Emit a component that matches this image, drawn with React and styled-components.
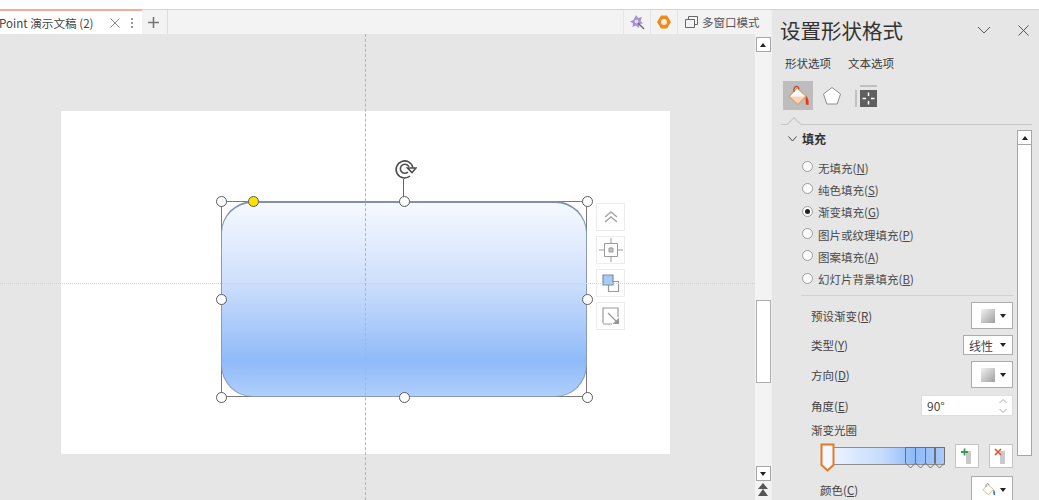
import React from "react";
import styled, { createGlobalStyle } from "styled-components";

const FONT = `"Noto Sans CJK SC", "Noto Sans", sans-serif`;

const GlobalStyle = createGlobalStyle`
  html, body { margin: 0; padding: 0; background: #fff; overflow: hidden; }
  body { font-family: ${FONT}; }
`;

const Page = styled.div`
  width: 1039px;
  height: 500px;
  display: flex;
  flex-direction: column;
  overflow: hidden;
`;
const TopGap = styled.div`
  height: 10px;
  flex: none;
  background: #fff;
  border-bottom: 1px solid #d4d4d4;
  box-sizing: border-box;
`;
const Body = styled.div`
  flex: 1;
  display: flex;
  min-height: 0;
`;
const Workspace = styled.div`
  width: 771px;
  flex: none;
  display: flex;
  flex-direction: column;
`;

/* tab bar */
const TabBar = styled.div`
  height: 24px;
  flex: none;
  display: flex;
  align-items: stretch;
  background: #f3f3f3;
`;
const Tab = styled.div`
  width: 142px;
  margin-top: -1px;
  height: 26px;
  box-sizing: border-box;
  background: #fff;
  border-top: 2px solid #f7a99c;
  display: flex;
  align-items: center;
  font-size: 11.6px;
  color: #444;
  white-space: nowrap;
  overflow: hidden;
`;
const TabTitle = styled.span`
  margin-left: -1px;
  width: 110px;
  flex: none;
`;
const TabDots = styled.svg`
  margin-left: 5px;
`;
const TabAdd = styled.div`
  width: 26px;
  box-sizing: border-box;
  padding-right: 3px;
  border-right: 1px solid #dcdcdc;
  display: flex;
  align-items: center;
  justify-content: center;
`;
const TabSpacer = styled.div`
  flex: 1;
`;
const TabTool = styled.div`
  width: 26px;
  border-left: 1px solid #e6e6e6;
  display: flex;
  align-items: center;
  justify-content: center;
`;
const WindowMode = styled.div`
  width: 94px;
  border-left: 1px solid #e6e6e6;
  box-sizing: border-box;
  padding-left: 7px;
  display: flex;
  align-items: center;
  gap: 4px;
  font-size: 11.5px;
  color: #555;
  white-space: nowrap;
`;

/* editor */
const EditorRow = styled.div`
  flex: 1;
  display: flex;
  min-height: 0;
`;
const Editor = styled.div`
  flex: 1;
  position: relative;
  background: #e6e6e6;
  padding: 77px 0 0 61px;
  box-sizing: border-box;
`;
const Slide = styled.div`
  width: 609px;
  height: 343px;
  background: #fff;
  position: relative;
`;
const GuideV = styled.div`
  position: absolute;
  left: 365px;
  top: 0;
  bottom: 0;
  border-left: 1px dashed #b4b4b4;
`;
const GuideH = styled.div`
  position: absolute;
  left: 0;
  right: 0;
  top: 249px;
  border-top: 1px dotted #d2d2d2;
`;
const Frame = styled.div`
  position: absolute;
  left: 160px;
  top: 90px;
  width: 366px;
  height: 196px;
  outline: 1px solid #7a7a7a;
  outline-offset: -1px;
`;
const RoundRect = styled.div`
  position: absolute;
  inset: 0;
  border-radius: 32px;
  border: 1px solid #8a9ab8;
  border-top: 2px solid #7f90b0;
  background: linear-gradient(180deg, #f6f9ff 0%, #cfe0fc 40%, #8fbaf9 82%, #b0cffb 100%);
`;
const Handle = styled.div`
  position: absolute;
  left: ${(p) => p.$x};
  top: ${(p) => p.$y};
  width: 9px;
  height: 9px;
  margin: -5.5px 0 0 -5.5px;
  border-radius: 50%;
  background: ${(p) => (p.$yellow ? "#ffe100" : "#fff")};
  border: 1.5px solid #5c5c5c;
  box-sizing: content-box;
`;
const RotateStem = styled.div`
  position: absolute;
  left: calc(50% - 1px);
  top: -22px;
  height: 18px;
  border-left: 1.5px solid #666;
`;
const RotateIcon = styled.svg`
  position: absolute;
  left: calc(50% - 11px);
  top: -43px;
`;
const SideTools = styled.div`
  position: absolute;
  left: 375px;
  top: 2px;
  display: flex;
  flex-direction: column;
  gap: 5px;
`;
const SideTool = styled.div`
  width: 29px;
  height: 28px;
  box-sizing: border-box;
  border: 1px solid #ececec;
  background: #fff;
  display: flex;
  align-items: center;
  justify-content: center;
`;

/* scrollbars */
const ScrollColumn = styled.div`
  width: 16px;
  flex: none;
  background: #f3f3f3;
  display: flex;
  flex-direction: column;
  align-items: center;
  box-sizing: border-box;
  padding-top: 3px;
`;
const ScrollButton = styled.div`
  width: 15px;
  height: 15px;
  flex: none;
  box-sizing: border-box;
  background: #fff;
  border: 1px solid #a6a6a6;
  margin-top: ${(p) => p.$top || 0}px;
  display: flex;
  align-items: center;
  justify-content: center;
`;
const Thumb = styled.div`
  width: 15px;
  height: ${(p) => p.$h}px;
  flex: none;
  box-sizing: border-box;
  margin-top: ${(p) => p.$top}px;
  background: #fff;
  border: 1px solid #aeaeae;
`;
const DoubleUp = styled.svg`
  margin-top: 2px;
  flex: none;
`;

/* panel */
const Panel = styled.div`
  flex: 1;
  background: #e6e6e6;
  border-left: 1px solid #f0f0f0;
  margin-top: 0;
  display: flex;
  flex-direction: column;
  color: #3c3c3c;
  min-width: 0;
`;
const PanelHead = styled.div`
  height: 41px;
  flex: none;
  box-sizing: border-box;
  padding: 0 10px 1px 8px;
  display: flex;
  align-items: center;
`;
const PanelTitle = styled.div`
  flex: 1;
  font-size: 20.5px;
  line-height: 30px;
  color: #333;
`;
const HeadIcon = styled.svg`
  margin-left: ${(p) => p.$gap || 0}px;
`;
const PanelTabs = styled.div`
  height: 24px;
  flex: none;
  padding: 0 0 0 13px;
  display: flex;
  align-items: center;
  gap: 17px;
  font-size: 11.5px;
  color: #3a3a3a;
`;
const IconRow = styled.div`
  height: 29px;
  margin-top: 6px;
  flex: none;
  padding-left: 11px;
  display: flex;
  gap: 4px;
`;
const IconTab = styled.div`
  width: 30px;
  height: 29px;
  display: flex;
  align-items: center;
  justify-content: center;
  background: ${(p) => (p.$active ? "#bdbdbd" : "transparent")};
`;
const Divider = styled.div`
  height: 15px;
  flex: none;
  margin: 0 7px 0 9px;
  box-sizing: border-box;
  border-bottom: 1px solid #c6c6c6;
  position: relative;
  &::before {
    content: "";
    position: absolute;
    left: 8px;
    bottom: -5px;
    width: 9px;
    height: 9px;
    background: #e6e6e6;
    border-left: 1px solid #c6c6c6;
    border-top: 1px solid #c6c6c6;
    transform: rotate(45deg);
  }
`;
const PanelBody = styled.div`
  flex: 1;
  display: flex;
  min-height: 0;
  padding-top: 5px;
`;
const Form = styled.div`
  width: 245px;
  flex: none;
  display: flex;
  flex-direction: column;
  box-sizing: border-box;
  padding-right: 4px;
`;
const SectionHead = styled.div`
  height: 21px;
  padding-left: 16px;
  display: flex;
  align-items: center;
  gap: 5px;
  font-size: 12px;
  font-weight: 700;
  color: #333;
`;
const RadioList = styled.div`
  margin-top: 9.5px;
  padding-left: 30px;
  display: flex;
  flex-direction: column;
`;
const RadioRow = styled.div`
  height: 22.3px;
  display: flex;
  align-items: center;
  gap: 5px;
  font-size: 11.5px;
  color: #4a4a4a;
  white-space: nowrap;
`;
const RadioDot = styled.span`
  width: 11px;
  height: 11px;
  flex: none;
  box-sizing: border-box;
  border-radius: 50%;
  border: 1px solid #9c9c9c;
  background: #fbfbfb;
  display: flex;
  align-items: center;
  justify-content: center;
  margin-top: -2px;
  &::after {
    content: "";
    display: ${(p) => (p.$on ? "block" : "none")};
    width: 5px;
    height: 5px;
    border-radius: 50%;
    background: #222;
  }
`;
const FormRule = styled.div`
  margin: 5px 0 0 29px;
  width: 212px;
  border-top: 1px solid #d0d0d0;
`;
const FormRow = styled.div`
  height: ${(p) => p.$h}px;
  margin-top: ${(p) => p.$top || 0}px;
  padding-left: ${(p) => p.$indent || 39}px;
  display: flex;
  align-items: center;
  justify-content: space-between;
  font-size: 11.5px;
  color: #444;
  white-space: nowrap;
`;
const DropBox = styled.div`
  width: ${(p) => p.$w}px;
  height: ${(p) => p.$h}px;
  box-sizing: border-box;
  background: #fff;
  border: 1px solid #ababab;
  display: flex;
  align-items: center;
  justify-content: space-between;
  padding: 0 6px 0 ${(p) => p.$pl || 9}px;
  font-size: 12px;
  color: #444;
`;
const Swatch = styled.span`
  width: 14px;
  height: 14px;
  background: linear-gradient(135deg, #f2f2f2, #9e9e9e);
`;
const Caret = styled.span`
  width: 0;
  height: 0;
  border-left: 3.5px solid transparent;
  border-right: 3.5px solid transparent;
  border-top: 4px solid #222;
`;
const CaretUp = styled(Caret)`
  border-top: none;
  border-bottom: 4px solid #222;
`;
const SpinBox = styled.div`
  width: 92px;
  height: 21px;
  box-sizing: border-box;
  background: #fff;
  border: 1px solid #dedede;
  padding: 0 4px 0 5px;
  display: flex;
  align-items: center;
  justify-content: space-between;
  font-size: 12px;
  color: #444;
`;
const SliderRow = styled.div`
  margin-top: 6px;
  height: 24px;
  display: flex;
  align-items: center;
  padding-left: 49px;
`;
const SliderTrack = styled.div`
  width: 124px;
  height: 18px;
  flex: none;
  box-sizing: border-box;
  position: relative;
  border: 1px solid #8d8d8d;
  background: linear-gradient(90deg, #f4f8ff 0%, #c5dbfc 50%, #8fbaf9 75%, #a9cbfb 100%);
`;
const StopMark = styled.svg`
  position: absolute;
  left: ${(p) => p.$x}px;
  top: ${(p) => p.$top}px;
`;
const StopButton = styled.div`
  width: 24px;
  height: 24px;
  flex: none;
  box-sizing: border-box;
  margin-left: ${(p) => p.$gap}px;
  background: #fff;
  border: 1px solid #c4c4c4;
  display: flex;
  align-items: center;
  justify-content: center;
`;
const PanelScroll = styled.div`
  width: 15px;
  flex: none;
  display: flex;
  flex-direction: column;
`;
const PanelThumb = styled.div`
  width: 15px;
  height: 311px;
  box-sizing: border-box;
  background: #fff;
  border: 1px solid #a6a6a6;
  border-top: none;
`;

const Spin = () => (
  <svg width="10" height="20" viewBox="0 0 10 20" fill="none" stroke="#a8a8a8" strokeWidth="1">
    <path d="M1.5 7 L5 3.5 L8.500 7" />
    <path d="M1.5 13 L5 16.500 L8.500 13" />
  </svg>
);

const Bucket = ({ size = 24, mini }) => (
  <svg width={size} height={size} viewBox="0 0 24 24" fill="none">
    <path d="M11 4 L20 12 L12 20.500 L3 12.500 Z" fill="#fff" stroke="#d8a070" strokeWidth="1.200" />
    <path d="M8 8 C7 2 12 0.500 13 5" stroke={mini ? "#777" : "#c04525"} strokeWidth="1.200" />
    <path d="M20 12 C22 14 23 16 22.500 21 L20 20.500 C19.500 17 19.500 15 20 12 Z" fill={mini ? "#3a78c8" : "#ee3515"} />
    {!mini && <path d="M4 12.500 H19.500 L12 20 Z" fill="#f5b885" opacity="0.6" />}
  </svg>
);

const stops = [83, 93, 103, 112];
const radios = [
  ["无填充", "N"],
  ["纯色填充", "S"],
  ["渐变填充", "G", true],
  ["图片或纹理填充", "P"],
  ["图案填充", "A"],
  ["幻灯片背景填充", "B"],
];
const handles = [
  ["0%", "0%"], ["50%", "0%"], ["100%", "0%"],
  ["0%", "50%"], ["100%", "50%"],
  ["0%", "100%"], ["50%", "100%"], ["100%", "100%"],
];

export default function App() {
  return (
    <Page>
      <GlobalStyle />
      <TopGap />
      <Body>
        <Workspace>
          <TabBar>
            <Tab>
              <TabTitle>Point 演示文稿 (2)</TabTitle>
              <svg width="12" height="12" viewBox="0 0 12 12" stroke="#8c8c8c" strokeWidth="1">
                <path d="M1.500 1.500 L10.500 10.500 M10.500 1.500 L1.500 10.500" />
              </svg>
              <TabDots width="12" height="12" viewBox="0 0 12 12" fill="#777">
                <circle cx="6" cy="2" r="1" /><circle cx="6" cy="6" r="1" /><circle cx="6" cy="10" r="1" />
              </TabDots>
            </Tab>
            <TabAdd>
              <svg width="13" height="13" viewBox="0 0 13 13" stroke="#777" strokeWidth="1.6">
                <path d="M6.500 1 V12 M1 6.500 H12" />
              </svg>
            </TabAdd>
            <TabSpacer />
            <TabTool>
              <svg width="16" height="16" viewBox="0 0 16 16">
                <path d="M7 1 L9 4 L13 3 L11.500 7 L14 9.500 L10.500 10 L10 14 L7 11.500 L3.500 13 L4 9.500 L1 7.500 L4.500 6 Z" fill="#a78fd0" />
                <path d="M9 9 L15 15" stroke="#6d6d6d" strokeWidth="1.400" />
                <circle cx="7.500" cy="7.500" r="2" fill="#e0d4f2" />
              </svg>
            </TabTool>
            <TabTool>
              <svg width="16" height="16" viewBox="0 0 16 16">
                <path d="M5 1.500 H11 L15 8 L11 14.500 H5 L1 8 Z" fill="#f08a1c" />
                <circle cx="8" cy="8" r="3" fill="#fbeedd" />
              </svg>
            </TabTool>
            <WindowMode>
              <svg width="13" height="12" viewBox="0 0 13 12" fill="none" stroke="#666" strokeWidth="1">
                <path d="M0.500 3.500 H9.500 V11.500 H0.500 Z" />
                <path d="M3.500 3.500 V0.500 H12.500 V8.500 H9.500" />
              </svg>
              多窗口模式
            </WindowMode>
          </TabBar>
          <EditorRow>
            <Editor>
              <Slide>
                <Frame>
                  <RoundRect />
                  <RotateStem />
                  <RotateIcon width="24" height="24" viewBox="0 0 24 24" fill="none" stroke="#4f4f4f" strokeWidth="1.600">
                    <path d="M17 18 A8.500 8.500 0 1 1 20 10" />
                    <path d="M15 14 A4.500 4.500 0 1 1 16 9" />
                    <path d="M14.500 10 H23 L19 14.500 Z" />
                  </RotateIcon>
                  {handles.map(([x, y]) => (
                    <Handle key={x + y} $x={x} $y={y} />
                  ))}
                  <Handle $x="32px" $y="0%" $yellow />
                  <SideTools>
                    <SideTool>
                      <svg width="16" height="14" viewBox="0 0 16 14" fill="none" stroke="#a5a5a5" strokeWidth="1.500">
                        <path d="M2 7 L8 2 L14 7 M2 12 L8 7 L14 12" />
                      </svg>
                    </SideTool>
                    <SideTool>
                      <svg width="24" height="24" viewBox="0 0 24 24" fill="none" stroke="#9a9a9a" strokeWidth="1">
                        <path d="M5.500 5.500 H18.500 V18.500 H5.500 Z" />
                        <path d="M10 10 H14 V14 H10 Z" fill="#c4c4c4" />
                        <path d="M12 0 V5 M12 19 V24 M0 12 H5 M19 12 H24" />
                      </svg>
                    </SideTool>
                    <SideTool>
                      <svg width="18" height="19" viewBox="0 0 18 19" fill="none">
                        <path d="M6.500 7.500 H16.500 V17.500 H6.500 Z" stroke="#9a9a9a" strokeWidth="1.200" />
                        <path d="M1 1 H11 V11 H1 Z" fill="#a9cbf3" stroke="#7c8ea8" strokeWidth="1.200" />
                      </svg>
                    </SideTool>
                    <SideTool>
                      <svg width="18" height="18" viewBox="0 0 18 18" fill="none" stroke="#9a9a9a" strokeWidth="1.200">
                        <path d="M1 16 V1 H16 V10 M1 17 H10" />
                        <path d="M6 6 L14 14" />
                        <path d="M12 16.500 H16.500 V12 Z" fill="#8d8d8d" />
                      </svg>
                    </SideTool>
                  </SideTools>
                </Frame>
              </Slide>
              <GuideV />
              <GuideH />
            </Editor>
            <ScrollColumn>
              <ScrollButton><CaretUp /></ScrollButton>
              <Thumb $top={248} $h={83} />
              <ScrollButton $top={83}><Caret /></ScrollButton>
              <DoubleUp width="14" height="14" viewBox="0 0 14 14" fill="#555">
                <path d="M7 0 L12 6 H2 Z M7 6 L12 13 H2 Z" />
              </DoubleUp>
            </ScrollColumn>
          </EditorRow>
        </Workspace>
        <Panel>
          <PanelHead>
            <PanelTitle>设置形状格式</PanelTitle>
            <HeadIcon width="14" height="8" viewBox="0 0 14 8" fill="none" stroke="#555" strokeWidth="1">
              <path d="M1 1 L7 7 L13 1" />
            </HeadIcon>
            <HeadIcon $gap={27} width="11" height="11" viewBox="0 0 11 11" fill="none" stroke="#555" strokeWidth="1">
              <path d="M0.500 0.500 L10.500 10.500 M10.500 0.500 L0.500 10.500" />
            </HeadIcon>
          </PanelHead>
          <PanelTabs>
            <span>形状选项</span>
            <span>文本选项</span>
          </PanelTabs>
          <IconRow>
            <IconTab $active><Bucket /></IconTab>
            <IconTab>
              <svg width="20" height="20" viewBox="0 0 20 20">
                <path d="M10 1.500 L18.500 8 L15.200 18 H4.800 L1.500 8 Z" fill="#fff" stroke="#8e8e8e" strokeWidth="1" />
              </svg>
            </IconTab>
            <IconTab>
              <svg width="24" height="24" viewBox="0 0 24 24" fill="none">
                <path d="M6 2 H23 M2 6 V23" stroke="#9a9a9a" strokeWidth="1" />
                <path d="M6 6 H23 V23 H6 Z" fill="#5f5f5f" />
                <path d="M14.500 8.500 V12 M14.500 17 V20.500 M8.500 14.500 H12 M17 14.500 H20.500" stroke="#fff" strokeWidth="1.500" />
              </svg>
            </IconTab>
          </IconRow>
          <Divider />
          <PanelBody>
            <Form>
              <SectionHead>
                <svg width="9" height="6" viewBox="0 0 9 6" fill="none" stroke="#444" strokeWidth="1">
                  <path d="M0.500 0.500 L4.500 5 L8.500 0.500" />
                </svg>
                填充
              </SectionHead>
              <RadioList>
                {radios.map(([label, key, on]) => (
                  <RadioRow key={key}>
                    <RadioDot $on={on} />
                    <span>{label}(<u>{key}</u>)</span>
                  </RadioRow>
                ))}
              </RadioList>
              <FormRule />
              <FormRow $h={27} $top={6}>
                <span>预设渐变(<u>R</u>)</span>
                <DropBox $w={42} $h={27}><Swatch /><Caret /></DropBox>
              </FormRow>
              <FormRow $h={20} $top={6}>
                <span>类型(<u>Y</u>)</span>
                <DropBox $w={50} $h={20} $pl={5}>线性<Caret /></DropBox>
              </FormRow>
              <FormRow $h={27} $top={6}>
                <span>方向(<u>D</u>)</span>
                <DropBox $w={42} $h={27}><Swatch /><Caret /></DropBox>
              </FormRow>
              <FormRow $h={21} $top={7}>
                <span>角度(<u>E</u>)</span>
                <SpinBox>90°<Spin /></SpinBox>
              </FormRow>
              <FormRow $h={18} $top={6}>
                <span>渐变光圈</span>
              </FormRow>
              <SliderRow>
                <SliderTrack>
                  <StopMark $x={-2} $top={-5} width="15" height="29" viewBox="0 0 15 29" fill="#f4f7ff" stroke="#e07b26" strokeWidth="2">
                    <path d="M1.500 1.500 H13.500 V22 L7.500 27.500 L1.500 22 Z" />
                  </StopMark>
                  {stops.map((x) => (
                    <StopMark key={x} $x={x} $top={-1} width="11" height="22" viewBox="0 0 11 22" fill="none" stroke="#6f6f6f" strokeWidth="1">
                      <path d="M0.500 0.500 H10.500 V16 L5.500 21 L0.500 16 Z" />
                    </StopMark>
                  ))}
                </SliderTrack>
                <StopButton $gap={10}>
                  <svg width="14" height="18" viewBox="0 0 14 18" fill="none">
                    <path d="M6 4 H11 V17 H6 Z" fill="#c9c9c9" />
                    <path d="M1 5 H8 M4.500 1.500 V8.500" stroke="#3d9a52" strokeWidth="1.800" />
                  </svg>
                </StopButton>
                <StopButton $gap={10}>
                  <svg width="14" height="18" viewBox="0 0 14 18" fill="none">
                    <path d="M6 4 H11 V17 H6 Z" fill="#c9c9c9" />
                    <path d="M1 2 L7 8 M7 2 L1 8" stroke="#e0502e" strokeWidth="1.600" />
                  </svg>
                </StopButton>
              </SliderRow>
              <FormRow $h={27} $top={8} $indent={48}>
                <span>颜色(<u>C</u>)</span>
                <DropBox $w={42} $h={27}><Bucket size={15} mini /><Caret /></DropBox>
              </FormRow>
            </Form>
            <PanelScroll>
              <ScrollButton><CaretUp /></ScrollButton>
              <PanelThumb />
            </PanelScroll>
          </PanelBody>
        </Panel>
      </Body>
    </Page>
  );
}
